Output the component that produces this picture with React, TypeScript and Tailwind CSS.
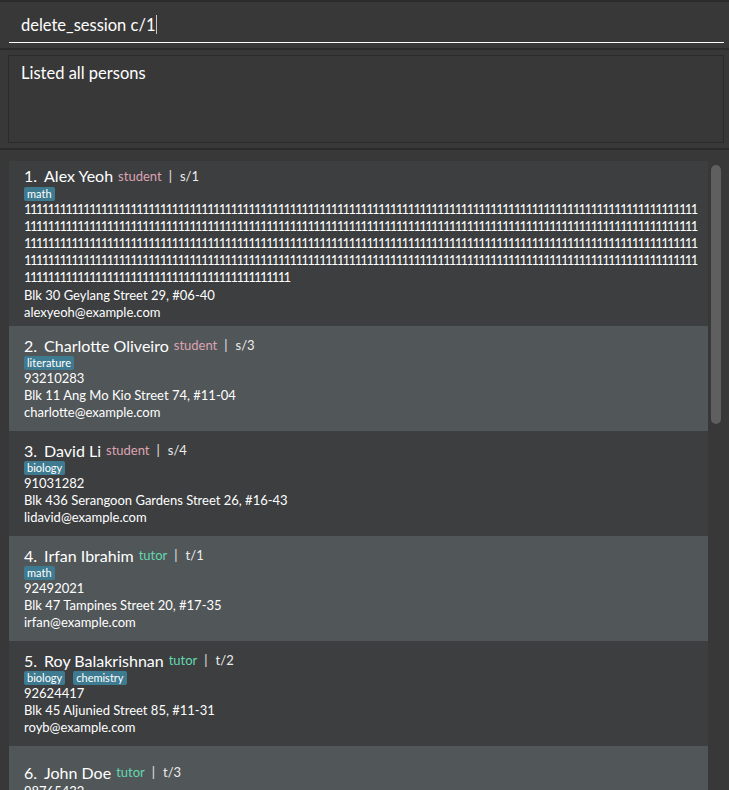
import React from "react";

type Person = {
  name: string;
  role: "student" | "tutor";
  code: string;
  tags: string[];
  phone: string[];
  address: string;
  email: string;
};

const ONES_FULL = "1".repeat(114);
const ONES_LAST = "1".repeat(45);

const persons: Person[] = [
  {
    name: "Alex Yeoh",
    role: "student",
    code: "s/1",
    tags: ["math"],
    phone: [ONES_FULL, ONES_FULL, ONES_FULL, ONES_FULL, ONES_LAST],
    address: "Blk 30 Geylang Street 29, #06-40",
    email: "alexyeoh@example.com",
  },
  {
    name: "Charlotte Oliveiro",
    role: "student",
    code: "s/3",
    tags: ["literature"],
    phone: ["93210283"],
    address: "Blk 11 Ang Mo Kio Street 74, #11-04",
    email: "charlotte@example.com",
  },
  {
    name: "David Li",
    role: "student",
    code: "s/4",
    tags: ["biology"],
    phone: ["91031282"],
    address: "Blk 436 Serangoon Gardens Street 26, #16-43",
    email: "lidavid@example.com",
  },
  {
    name: "Irfan Ibrahim",
    role: "tutor",
    code: "t/1",
    tags: ["math"],
    phone: ["92492021"],
    address: "Blk 47 Tampines Street 20, #17-35",
    email: "irfan@example.com",
  },
  {
    name: "Roy Balakrishnan",
    role: "tutor",
    code: "t/2",
    tags: ["biology", "chemistry"],
    phone: ["92624417"],
    address: "Blk 45 Aljunied Street 85, #11-31",
    email: "royb@example.com",
  },
  {
    name: "John Doe",
    role: "tutor",
    code: "t/3",
    tags: [],
    phone: ["98765432"],
    address: "311, Clementi Ave 2, #02-25",
    email: "johnd@example.com",
  },
];

function Card({ p, i }: { p: Person; i: number }) {
  const long = p.phone.length > 1;
  return (
    <div
      className={
        "min-h-[105px] flex flex-col justify-center py-[5px] pl-[15px] shrink-0 " +
        (i % 2 === 0 ? "bg-[#3c3e3f]" : "bg-[#515658]")
      }
    >
      <div className="h-[20.5px] flex items-center whitespace-nowrap">
        <span className="text-[16px] font-normal text-white">{i + 1}.</span>
        <span className="text-[16px] font-normal text-white ml-[7px]">{p.name}</span>
        <span
          className={
            "text-[13px] ml-[5px] " +
            (p.role === "student" ? "text-[#dca4b4]" : "text-[#63d8b0]")
          }
        >
          {p.role}
        </span>
        <span className="text-[13px] ml-[7px] text-[#e6e6e6]">|</span>
        <span className="text-[13px] ml-[8px] text-[#ededed]">{p.code}</span>
      </div>
      {p.tags.length > 0 && (
        <div className="h-[14.2px] flex items-start gap-[8px]">
          {p.tags.map((t) => (
            <span
              key={t}
              className="bg-[#3e7b91] text-white text-[11px] leading-[12px] py-px px-[3px] rounded-[2px]"
            >
              {t}
            </span>
          ))}
        </div>
      )}
      {p.phone.map((line, k) => (
        <div
          key={k}
          className={
            "text-[13px] leading-[17.17px] text-white whitespace-nowrap " +
            (long ? "tracking-[-1.64px]" : "")
          }
        >
          {line}
        </div>
      ))}
      <div className="text-[13px] leading-[17.17px] text-white whitespace-nowrap">{p.address}</div>
      <div className="text-[13px] leading-[17.17px] text-white whitespace-nowrap">{p.email}</div>
    </div>
  );
}

export default function App() {
  return (
    <div className="w-[729px] h-[790px] overflow-hidden bg-[#383838] flex flex-col font-['Lato',sans-serif] text-white">
      <div className="h-[2px] shrink-0 bg-[#2b2b2b]" />
      <div className="h-[46px] shrink-0 pl-[9px] pr-[5px] pt-[13px]">
        <div className="h-[28px] border-b border-white pl-[12px] flex items-start text-[16.5px] leading-[20px] text-white">
          <span>delete_session c/1</span>
          <span className="w-px h-[19px] ml-[1px] bg-[#c8c8c8]" />
        </div>
      </div>
      <div className="h-[2px] shrink-0 bg-[#2b2b2b]" />
      <div className="h-[98px] shrink-0 pl-[8px] pr-[5px] py-[5px]">
        <div className="h-full border border-[#2b2b2b] pl-[12px] pt-[7px] text-[16.5px] leading-[20px] text-white">
          Listed all persons
        </div>
      </div>
      <div className="h-[2px] shrink-0 bg-[#2b2b2b]" />
      <div className="flex-1 min-h-0 overflow-hidden pl-[9px] pt-[11px] flex gap-[3px]">
        <div className="w-[699px] shrink-0 flex flex-col">
          {persons.map((p, i) => (
            <Card key={i} p={p} i={i} />
          ))}
        </div>
        <div className="w-[10px] shrink-0">
          <div className="mt-[4px] h-[259px] rounded-full bg-[#5f5f5f]" />
        </div>
      </div>
    </div>
  );
}
